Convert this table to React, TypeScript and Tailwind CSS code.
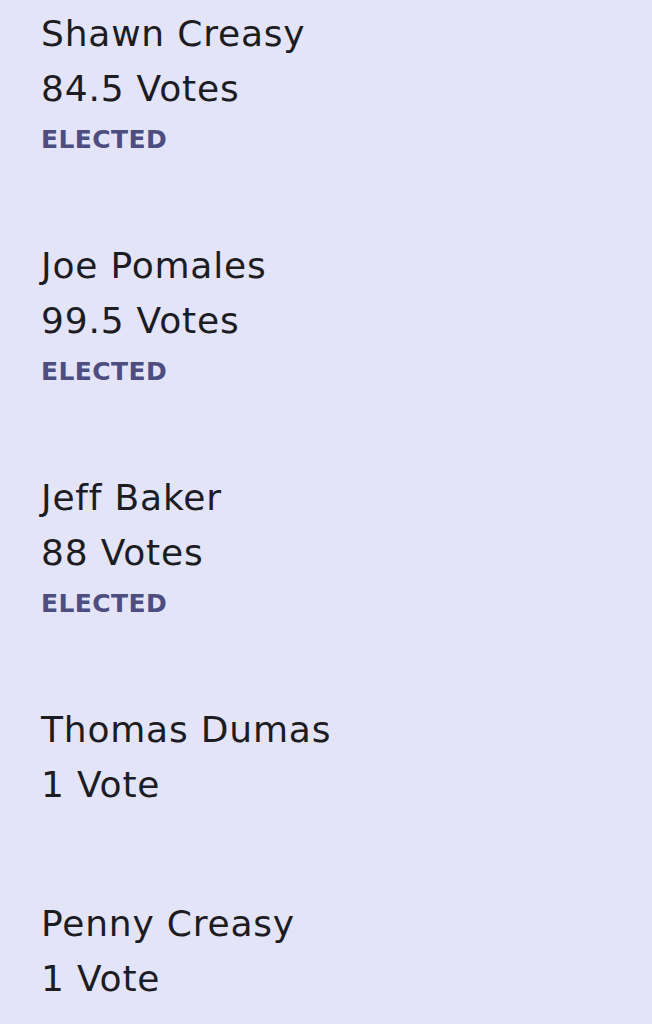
const candidates = [
  { name: 'Shawn Creasy', votes: '84.5 Votes', elected: true },
  { name: 'Joe Pomales', votes: '99.5 Votes', elected: true },
  { name: 'Jeff Baker', votes: '88 Votes', elected: true },
  { name: 'Thomas Dumas', votes: '1 Vote', elected: false },
  { name: 'Penny Creasy', votes: '1 Vote', elected: false },
];

export default function App() {
  return (
    <div className="min-h-[1024px] bg-[#e4e4f8] pl-[41px] pt-[6px] font-['DejaVu_Sans',sans-serif] text-[#1c1c22]">
      <div className="flex flex-col gap-[84px]">
        {candidates.map(c => (
          <div key={c.name}>
            <div className="text-[36px] leading-[55px] tracking-[0.8px]">{c.name}</div>
            <div className="text-[36px] leading-[55px] tracking-[0.8px]">{c.votes}</div>
            {c.elected && (
              <div className="mt-[10px] text-[25px] leading-[28px] font-bold tracking-[0.4px] text-[#4d4d80]">
                ELECTED
              </div>
            )}
          </div>
        ))}
      </div>
    </div>
  );
}
